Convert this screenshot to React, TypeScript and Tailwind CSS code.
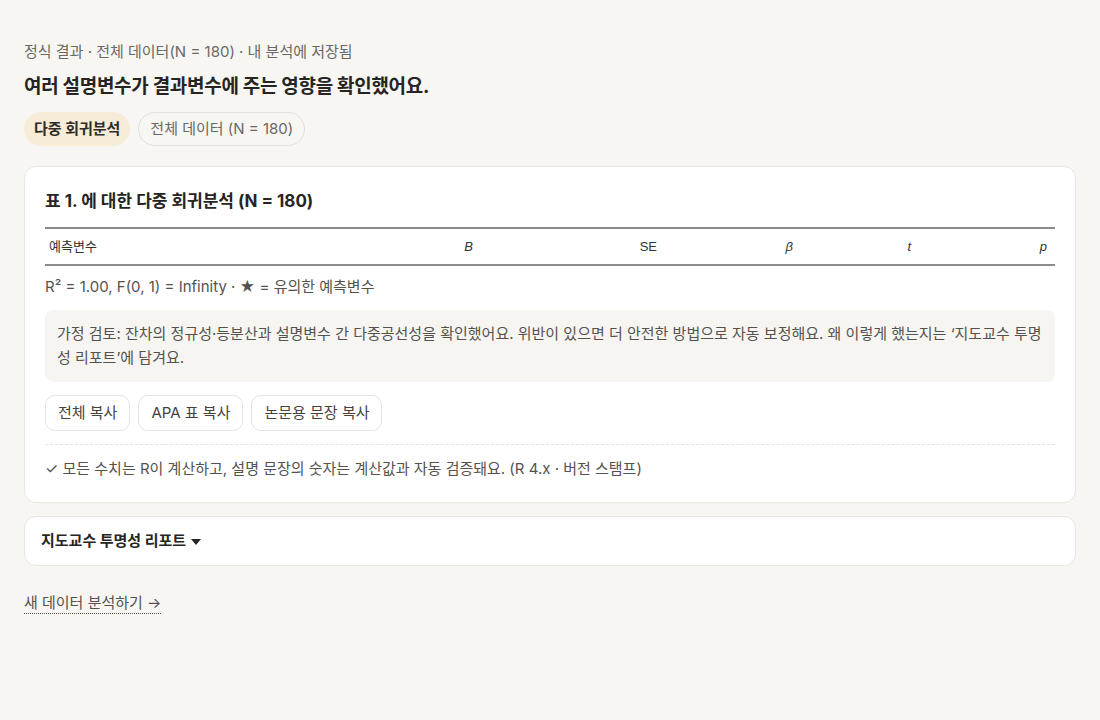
import React from "react";

const font = { fontFamily: '"Inter", "Noto Sans CJK KR", "Noto Sans", sans-serif' };

function HeaderCell({ children, className }: { children: React.ReactNode; className: string }) {
  return <div className={className}>{children}</div>;
}

export default function App() {
  return (
    <div className="min-h-[720px] w-full bg-[#f7f6f3] px-6 pt-[41px] text-[#2b2b2b]" style={font}>
      <p className="text-[15px] leading-[22px] text-[#6b6864]">정식 결과 · 전체 데이터(N = 180) · 내 분석에 저장됨</p>
      <h1 className="mt-[11px] text-[19px] font-bold leading-[26px] tracking-[-0.3px] text-[#262523]">
        여러 설명변수가 결과변수에 주는 영향을 확인했어요.
      </h1>
      <div className="mt-[12px] flex items-center gap-2">
        <span className="flex h-[34px] items-center rounded-full bg-[#f7ecd8] px-[10px] text-[15px] font-bold text-[#2f2d2a]">
          다중 회귀분석
        </span>
        <span className="flex h-[34px] items-center rounded-full border border-[#e2e0db] px-[11px] text-[15px] text-[#6b6864]">
          전체 데이터 (N = 180)
        </span>
      </div>

      <section className="mt-[20px] rounded-[12px] border border-[#e9e7e2] bg-white px-5 pt-[22px] pb-[22px]">
        <h2 className="text-[17px] font-bold leading-[24px] text-[#262523]">표 1. 에 대한 다중 회귀분석 (N = 180)</h2>
        <div
          className="mt-[14px] flex h-[39px] items-center border-y-2 border-[#8c8c8c] text-[13px] text-[#333]"
          style={{ fontFamily: '"Liberation Sans", "Noto Sans CJK KR", sans-serif' }}
        >
          <HeaderCell className="w-[336px] pl-1">예측변수</HeaderCell>
          <HeaderCell className="w-[100px] pr-2 text-right italic">B</HeaderCell>
          <HeaderCell className="w-[184px] pr-2 text-right">SE</HeaderCell>
          <HeaderCell className="w-[136px] pr-2 text-right italic">β</HeaderCell>
          <HeaderCell className="w-[118px] pr-2 text-right italic">t</HeaderCell>
          <HeaderCell className="w-[136px] pr-2 text-right italic">p</HeaderCell>
        </div>
        <p className="mt-[10px] text-[15px] leading-[22px] text-[#55524e]">
          R² = 1.00, F(0, 1) = Infinity · ★ = 유의한 예측변수
        </p>
        <div className="mt-[12px] rounded-[8px] bg-[#f6f5f2] px-3 py-3 text-[15px] leading-[24px] text-[#55524e]">
          가정 검토: 잔차의 정규성·등분산과 설명변수 간 다중공선성을 확인했어요. 위반이 있으면 더 안전한 방법으로 자동 보정해요. 왜 이렇게 했는지는 ‘지도교수 투명성 리포트’에 담겨요.
        </div>
        <div className="mt-[13px] flex gap-2">
          {["전체 복사", "APA 표 복사", "논문용 문장 복사"].map((t) => (
            <button
              key={t}
              className="flex h-[36px] items-center rounded-[10px] border border-[#e6e4df] bg-white px-3 text-[15px] text-[#45423e]"
            >
              {t}
            </button>
          ))}
        </div>
        <div className="mt-[13px] border-t border-dashed border-[#e6e4df]" />
        <p className="mt-[13px] text-[15px] leading-[22px] text-[#55524e]">
          ✓ 모든 수치는 R이 계산하고, 설명 문장의 숫자는 계산값과 자동 검증돼요. (R 4.x · 버전 스탬프)
        </p>
      </section>

      <section className="mt-[13px] flex h-[50px] items-center rounded-[12px] border border-[#e9e7e2] bg-white px-4">
        <span className="text-[15px] font-bold text-[#262523]">지도교수 투명성 리포트</span>
        <svg width="10" height="6" viewBox="0 0 10 6" className="ml-[5px] mt-[2px]">
          <path d="M0 0 L10 0 L5 6 Z" fill="#262523" />
        </svg>
      </section>

      <a className="mt-[26px] inline-block border-b border-dotted border-[#55524e] text-[15px] leading-[21px] text-[#55524e]">
        새 데이터 분석하기 →
      </a>
    </div>
  );
}
